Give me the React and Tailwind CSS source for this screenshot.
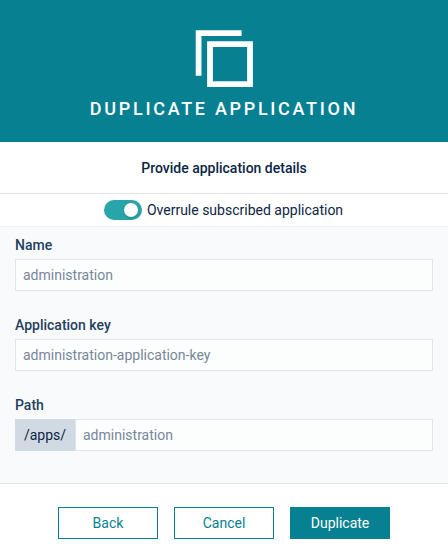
function DuplicateIcon() {
  return (
    <svg width="58" height="58" viewBox="0 0 58 58" fill="none" stroke="#fff" strokeWidth="5.75" aria-hidden="true">
      <path d="M3.6 45.7V3.2H46.6" />
      <path d="M15 14.1H55V54.1H15Z" />
    </svg>
  );
}

function Field({ label, value, prefix }) {
  return (
    <div className="h-20">
      <label className="block h-8 pt-[7px] text-[14px] leading-[22px] font-medium text-[#1f3f60]">{label}</label>
      <div className="flex h-8">
        {prefix && (
          <span className="flex w-[60px] shrink-0 items-center justify-center bg-[#d1d9e2] text-[14px] text-[#0b2545]">
            {prefix}
          </span>
        )}
        <input
          className="h-8 w-full min-w-0 border border-[#e2e4e9] bg-[#fcfdfd] px-[7px] text-[14px] text-[#778899] outline-none"
          defaultValue={value}
        />
      </div>
    </div>
  );
}

function Button({ children, primary }) {
  return (
    <button
      className={`h-8 w-[100px] border border-[#078091] text-[14px] ${
        primary ? "bg-[#078091] text-white" : "bg-white text-[#078091]"
      }`}
    >
      {children}
    </button>
  );
}

export default function App() {
  return (
    <div className="flex h-[560px] w-[448px] flex-col overflow-hidden bg-white font-['Roboto',sans-serif] text-[#0b2545]">
      <header className="flex h-[142px] shrink-0 flex-col items-center bg-[#078091] pt-[30px]">
        <DuplicateIcon />
        <h1 className="mt-[7px] text-[18px] leading-7 font-medium tracking-[2.7px] text-white uppercase antialiased">
          Duplicate application
        </h1>
      </header>
      <h2 className="flex h-[52px] shrink-0 items-center justify-center border-b border-[#e1e3e6] pt-px text-[14px] font-medium">
        Provide application details
      </h2>
      <div className="flex h-[33px] shrink-0 items-center justify-center border-b border-[#eff1f4] pr-px text-[14px]">
        <span className="mr-[5px] flex h-5 w-[38px] items-center justify-end rounded-full bg-[#27a5aa] pr-1">
          <span className="size-[14px] rounded-full bg-white shadow-[0_1px_2px_rgba(0,35,11,0.25)]" />
        </span>
        <span>Overrule subscribed application</span>
      </div>
      <main className="h-[257px] shrink-0 border-b border-[#e1e3e6] bg-[#f9fafc] px-[15px]">
        <Field label="Name" value="administration" />
        <Field label="Application key" value="administration-application-key" />
        <Field label="Path" value="administration" prefix="/apps/" />
      </main>
      <footer className="flex justify-center gap-4 pt-[23px]">
        <Button>Back</Button>
        <Button>Cancel</Button>
        <Button primary>Duplicate</Button>
      </footer>
    </div>
  );
}
